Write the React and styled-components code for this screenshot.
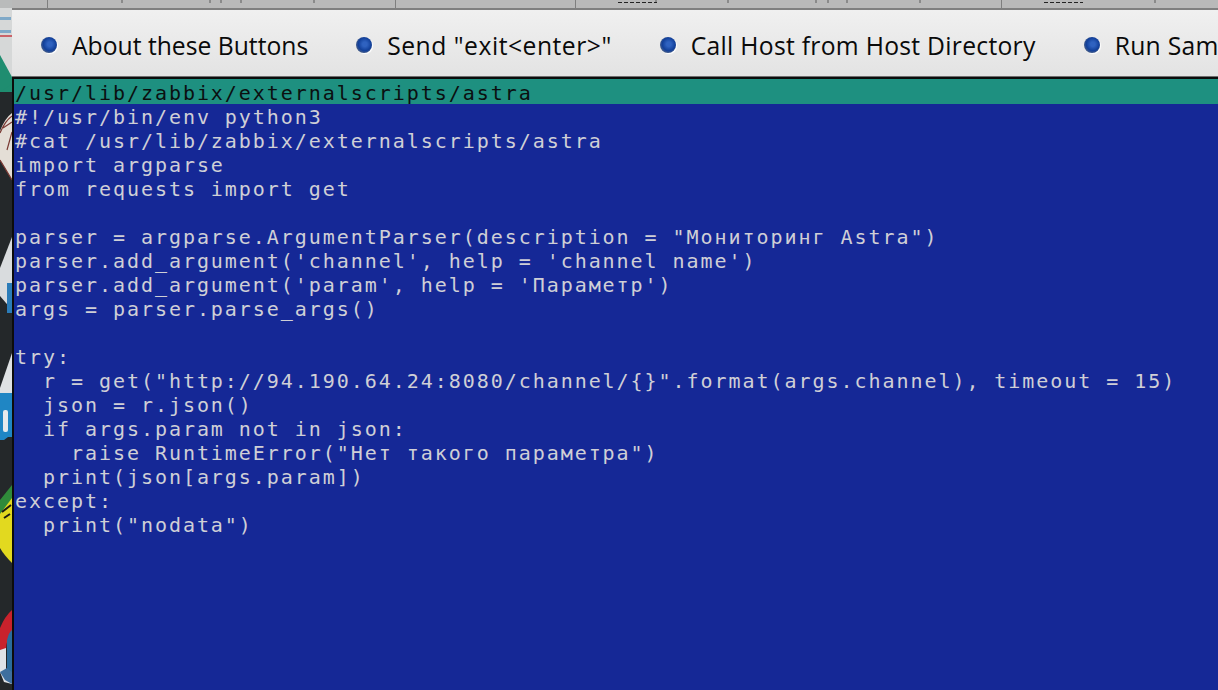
import React from 'react'
import styled, { createGlobalStyle } from 'styled-components'

const GlobalStyle = createGlobalStyle`
  html, body, #root {
    margin: 0;
    height: 100%;
    overflow: hidden;
    background: #24272a;
  }
`

const buttons = [
  { label: 'About these Buttons', tracking: 0 },
  { label: 'Send "exit<enter>"', tracking: 0.5 },
  { label: 'Call Host from Host Directory', tracking: 0.28 },
  { label: 'Run Sample', tracking: 0.28 },
]

// marks along the window edge above the toolbar, x relative to the terminal
const tabLines = [35, 383, 563, 989]
const tabTicks = [109, 197, 208, 228, 301, 643, 715, 803, 815, 834, 907, 1142]
const tabDashes = [606, 1032]

const code = `#!/usr/bin/env python3
#cat /usr/lib/zabbix/externalscripts/astra
import argparse
from requests import get

parser = argparse.ArgumentParser(description = "Мониторинг Astra")
parser.add_argument('channel', help = 'channel name')
parser.add_argument('param', help = 'Параметр')
args = parser.parse_args()

try:
  r = get("http://94.190.64.24:8080/channel/{}".format(args.channel), timeout = 15)
  json = r.json()
  if args.param not in json:
    raise RuntimeError("Нет такого параметра")
  print(json[args.param])
except:
  print("nodata")`

// slice of the desktop icons showing to the left of the window
const DesktopStrip = () => (
  <Strip>
    <svg width="12" height="690" viewBox="0 0 12 690">
      <rect width="12" height="690" fill="#24282a" />
      <rect width="12" height="92" fill="#d6d8d8" />
      <rect y="0" width="12" height="8" fill="#b9bbbb" />
      <path d="M0 18.5h11M0 31.5h11" stroke="#7fa9c8" strokeWidth="3" />
      <path d="M0 36h12" stroke="#c4323a" strokeWidth="1.4" />
      <path d="M0 55 L12 77 V78 H12 V92 H0Z" fill="#1f8d70" />
      <path d="M0 92 L12 84 V92Z" fill="#1f8d70" />
      <path d="M0 131 Q5 118 12 113 V180 Q5 168 0 160Z" fill="#e4ded6" />
      <path d="M0 133 Q5 121 12 116 M3 128 L12 122 M7 150 L12 132 M0 160 Q5 168 12 180" stroke="#7a3a34" strokeWidth="1.2" fill="none" />
      <path d="M0 268 L12 237 V310 L0 296Z" fill="#d9dcde" />
      <rect x="7" y="283" width="5" height="30" fill="#2b7cb8" />
      <path d="M0 388 L12 353 V393 H0Z" fill="#dfe2e4" />
      <path d="M0 393 H12 V437 H8 L4 440 H0Z" fill="#1f86c4" />
      <rect x="3" y="410" width="5" height="22" rx="2" fill="#e6eaec" />
      <path d="M0 510 L12 488 V563 Q4 555 0 548Z" fill="#e2d91f" />
      <path d="M0 500 L12 485 V498 L0 514Z" fill="#2f8a3a" />
      <path d="M2 512 L11 505 M4 518 L10 514" stroke="#1c1c14" strokeWidth="2" />
      <path d="M0 628 Q5 616 12 610 V632 Q6 640 6 650 V668 L0 670Z" fill="#c9222c" />
      <path d="M7 640 Q9 632 12 630 V678 L7 672Z" fill="#2a6c9c" />
      <path d="M0 650 L6 648 V670 L12 680 V684 L4 682 L0 672Z" fill="#dfe3e6" />
      <path d="M0 672 L5 680 L12 684 V672 L7 668 Z" fill="#3e6f9e" />
    </svg>
  </Strip>
)

export default function App() {
  return (
    <>
      <GlobalStyle />
      <Page>
        <DesktopStrip />
        <Terminal>
          <TabEdge>
            {tabLines.map(x => <TabLine key={x} $x={x} />)}
            {tabTicks.map(x => <TabTick key={x} $x={x} />)}
            {tabDashes.map(x => <TabDash key={x} $x={x} />)}
          </TabEdge>
          <Toolbar>
            {buttons.map(b => (
              <ToolButton key={b.label} $tracking={b.tracking}>
                <Bullet />
                {b.label}
              </ToolButton>
            ))}
          </Toolbar>
          <Divider />
          <TitleBar>/usr/lib/zabbix/externalscripts/astra</TitleBar>
          <Code>{code}</Code>
        </Terminal>
      </Page>
    </>
  )
}

const Page = styled.div`
  display: flex;
  width: 1218px;
  height: 690px;
  overflow: hidden;
`

const Strip = styled.div`
  flex: 0 0 12px;
  height: 690px;
  line-height: 0;
`

const Terminal = styled.div`
  flex: 1;
  min-width: 0;
  display: flex;
  flex-direction: column;
`

const TabEdge = styled.div`
  position: relative;
  flex: 0 0 8px;
  background: #b9b9b9;
  border-bottom: 2px solid #7f7f7f;
`

const TabLine = styled.span`
  position: absolute;
  left: ${p => p.$x}px;
  top: 0;
  width: 1px;
  height: 8px;
  background: #7f7f7f;
`

const TabTick = styled.span`
  position: absolute;
  left: ${p => p.$x}px;
  top: 0;
  width: 2px;
  height: 3px;
  background: #8a8a8a;
`

const TabDash = styled.span`
  position: absolute;
  left: ${p => p.$x}px;
  top: 2px;
  width: 39px;
  height: 1px;
  background: repeating-linear-gradient(90deg, #222 0 4px, transparent 4px 6px);
`

const Toolbar = styled.div`
  flex: 0 0 66px;
  display: flex;
  align-items: center;
  gap: 48px;
  padding-left: 29px;
  background: linear-gradient(#f0f0f0, #e3e3e3);
  white-space: nowrap;
  overflow: hidden;
`

const ToolButton = styled.div`
  display: flex;
  align-items: center;
  gap: 15px;
  padding-top: 4px;
  font-family: "Open Sans", "Liberation Sans", sans-serif;
  font-size: 24.7px;
  letter-spacing: ${p => p.$tracking}px;
  color: #0a0a0a;
`

const Bullet = styled.span`
  flex: 0 0 16px;
  height: 16px;
  border-radius: 50%;
  background: radial-gradient(circle at 55% 45%, #2f62c0 0 18%, #12409a 52%, #5f6c82 82%);
  box-shadow: 1px 1px 1px #ffffff;
`

const Divider = styled.div`
  flex: 0 0 3px;
  box-sizing: border-box;
  background: #0c0c0c;
  border-top: 1px solid #6e6e6e;
`

const Mono = styled.div`
  font-family: "DejaVu Sans Mono", "Liberation Mono", monospace;
  font-size: 20px;
  letter-spacing: 1.95px;
  line-height: 24px;
  padding-left: 1px;
  border-left: 2px solid #0c0c0c;
`

const TitleBar = styled(Mono)`
  flex: 0 0 25px;
  min-height: 0;
  box-sizing: border-box;
  padding-top: 2px;
  overflow: hidden;
  background: #1e9080;
  color: #0b0f10;
`

const Code = styled(Mono)`
  flex: 1;
  padding-top: 1px;
  background: #152896;
  color: #cfcfd6;
  white-space: pre;
  overflow: hidden;
`
